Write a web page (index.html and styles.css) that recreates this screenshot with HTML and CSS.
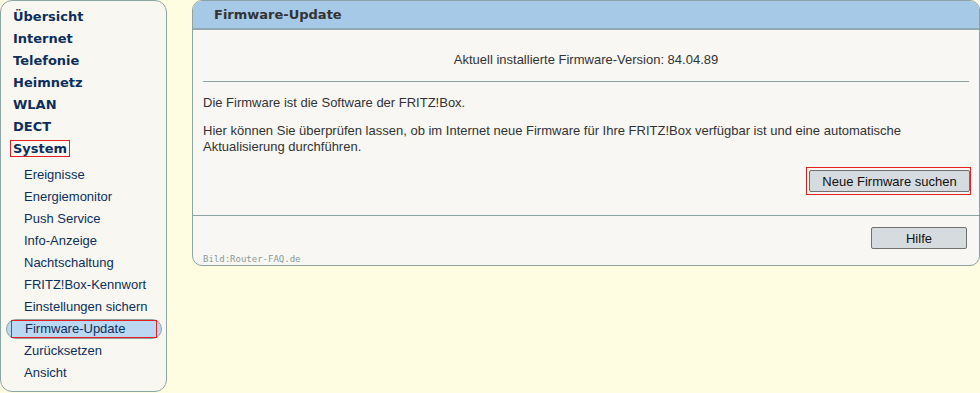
FILE: index.html
```html
<!DOCTYPE html>
<html>
<head>
  <title>Firmware-Update</title>
  <link rel="stylesheet" href="styles.css">
</head>
<body>
  <div id="page">
    <div id="menu">
      <a class="main">Übersicht</a>
      <a class="main">Internet</a>
      <a class="main">Telefonie</a>
      <a class="main">Heimnetz</a>
      <a class="main">WLAN</a>
      <a class="main">DECT</a>
      <a class="main"><span class="mark">System</span></a>
      <div class="subs">
        <a class="sub">Ereignisse</a>
        <a class="sub">Energiemonitor</a>
        <a class="sub">Push Service</a>
        <a class="sub">Info-Anzeige</a>
        <a class="sub">Nachtschaltung</a>
        <a class="sub">FRITZ!Box-Kennwort</a>
        <a class="sub">Einstellungen sichern</a>
        <a class="sub active"><span class="markBox">Firmware-Update</span></a>
        <a class="sub">Zurücksetzen</a>
        <a class="sub">Ansicht</a>
      </div>
    </div>

    <div id="content">
      <div class="head">Firmware-Update</div>
      <div class="body">
        <p class="version">Aktuell installierte Firmware-Version: 84.04.89</p>
        <hr>
        <p>Die Firmware ist die Software der FRITZ!Box.</p>
        <p>Hier können Sie überprüfen lassen, ob im Internet neue Firmware für Ihre FRITZ!Box verfügbar ist und eine automatische Aktualisierung durchführen.</p>
        <div class="actions">
          <span class="mark btnMark"><button class="btn wide">Neue Firmware suchen</button></span>
        </div>
      </div>
      <div class="foot">
        <button class="btn">Hilfe</button>
      </div>
      <div class="credit">Bild:Router-FAQ.de</div>
    </div>
  </div>
</body>
</html>
```

FILE: styles.css
```css
body {
  margin: 0;
  background-color: #fffde1;
  font-family: "Liberation Sans", Arial, sans-serif;
  font-size: 13px;
  color: #333;
}

#page {
  display: flex;
  align-items: flex-start;
  gap: 25px;
}

#menu {
  width: 167px;
  height: 392px;
  box-sizing: border-box;
  background-color: #f8f7f2;
  border: 1px solid #8da4a4;
  border-radius: 12px;
  padding: 5px 0 0 0;
  display: flex;
  flex-direction: column;
}

#menu a {
  display: block;
  height: 22px;
  line-height: 22px;
  color: #0c2f5c;
  white-space: nowrap;
}

#menu .main {
  font-family: "DejaVu Sans", Verdana, sans-serif;
  font-weight: bold;
  font-size: 13px;
  padding-left: 12px;
}

#menu .subs {
  padding-top: 4px;
}

#menu .sub {
  font-size: 13px;
  padding-left: 23px;
}

#menu .main .mark {
  padding: 0 2px;
  margin-left: -3px;
}

.mark {
  border: 1px solid #e41f1f;
}

#menu .active {
  margin: 1px 4px 1px 5px;
  padding-left: 0;
  height: 20px;
  line-height: 18px;
  background-color: #bcd7f1;
  border: 1px solid #8fa3a3;
  border-radius: 10px;
  box-sizing: border-box;
}

.markBox {
  display: block;
  margin: 0 4px 0 4px;
  padding-left: 13px;
  border: 1px solid #e41f1f;
  height: 16px;
  line-height: 16px;
}

#content {
  position: relative;
  flex: 1;
  height: 266px;
  box-sizing: border-box;
  background-color: #f8f7f3;
  border: 1px solid #8da4a4;
  border-radius: 10px;
  overflow: hidden;
}

.head {
  height: 27px;
  line-height: 28px;
  background-color: #a6c9e7;
  border-bottom: 2px solid #8fa8b0;
  padding-left: 21px;
  font-family: "DejaVu Sans", Verdana, sans-serif;
  font-weight: bold;
  font-size: 13px;
  color: #333;
}

.body {
  padding: 0 10px;
  border-bottom: 1px solid #8da4a4;
}

.body p {
  margin: 0 0 12px 0;
  line-height: 16px;
}

.body .version {
  text-align: center;
  padding-top: 22px;
  margin-bottom: 13px;
}

hr {
  border: none;
  border-top: 1px solid #8da4a4;
  margin: 0 0 13px 0;
}

.actions {
  display: flex;
  justify-content: flex-end;
  padding: 0 0 20px 0;
  margin-top: 6px;
}

.btnMark {
  display: inline-block;
  padding: 2px 0 2px 2px;
  margin-right: -2px;
}

.btn {
  font-family: "Liberation Sans", Arial, sans-serif;
  font-size: 13px;
  color: #111;
  background-color: #d6dbe0;
  border: 1px solid #6f7070;
  border-radius: 2px;
  height: 22px;
  width: 96px;
  padding: 0;
}

.btn.wide {
  width: 161px;
}

.foot {
  display: flex;
  justify-content: flex-end;
  padding: 11px 12px 0 0;
}

.credit {
  position: absolute;
  left: 10px;
  bottom: 1px;
  font-family: "DejaVu Sans Mono", monospace;
  font-size: 9px;
  color: #8a9a9a;
}
```
